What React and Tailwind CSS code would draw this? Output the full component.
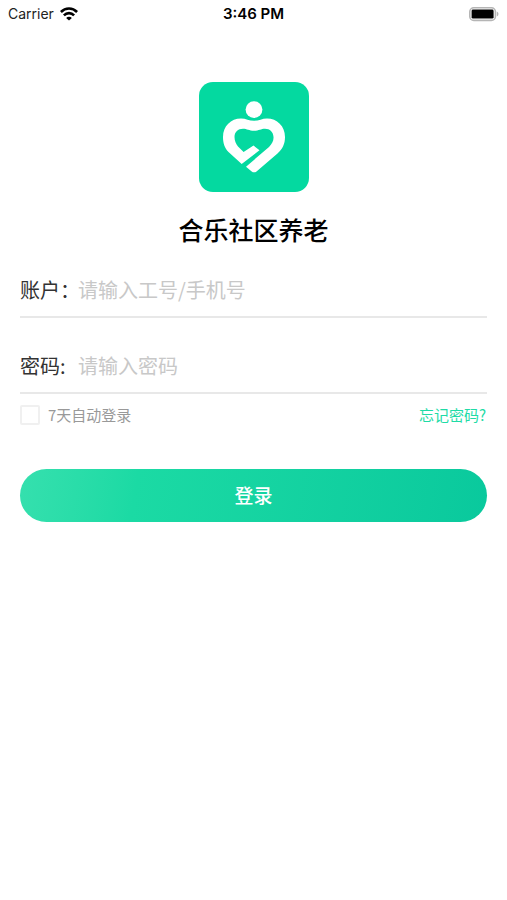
import { useState } from "react"

function StatusBar() {
  return (
    <header className="grid grid-cols-3 items-center h-7 px-2 font-['Inter','Liberation_Sans',sans-serif] text-[14px] leading-5 text-black">
      <div className="flex items-center gap-[6px] text-[#222]">
        <span>Carrier</span>
        <svg width="18" height="14" viewBox="0 0 18 14" fill="none" stroke="#000" strokeWidth="2.6">
          <path d="M0.9 5 C5.4 0.4 12.6 0.4 17.1 5" />
          <path d="M3.9 8.3 C6.8 5.4 11.2 5.4 14.1 8.3" />
          <path d="M9 13.6 L6.1 10.9 C7.7 9.4 10.3 9.4 11.9 10.9 Z" fill="#000" stroke="none" />
        </svg>
      </div>
      <span className="text-center text-[15px] font-semibold">3:46 PM</span>
      <svg className="justify-self-end" width="30" height="15" viewBox="0 0 30 15">
        <rect x="0.8" y="0.8" width="25.6" height="12.6" rx="4" fill="#fff" stroke="#b5b5b5" strokeWidth="1.6" />
        <rect x="2.6" y="2.6" width="22" height="9" rx="1.4" fill="#000" />
        <path d="M27.8 4.6 C30 5.4 30 8.8 27.8 9.6 Z" fill="#b5b5b5" />
      </svg>
    </header>
  )
}

function Logo() {
  return (
    <svg width="110" height="110" viewBox="0 0 110 110">
      <rect width="110" height="110" rx="14" fill="#04d9a0" />
      <circle cx="55" cy="27.6" r="8.4" fill="#fff" />
      <path
        fill="#fff"
        d="M42.7 82 L29.5 70 C25.5 66 24 61 24 55 C24 44 32 36.5 42 36.5 C47 36.5 50 38.8 55 38.8 C60 38.8 63 36.5 68 36.5 C78 36.5 86 44 86 55 C86 62 83.5 67 78.5 71.5 L57.5 89.5 Q55 91.2 52.7 89.5 L47 84.7 L70 65 C73 62 74.8 59 74.5 55 C74.2 50 71 46.8 66 46.8 C62 46.8 60 48.8 55 48.8 C50 48.8 48 46.8 44 46.8 C39 46.8 35.5 50 35.5 55 C35.5 59 37 62 39 64.5 L44.6 70 L54.5 63.5 L60.5 68.3 Z"
      />
    </svg>
  )
}

function Field({ id, label, ...rest }) {
  return (
    <div className="flex items-center h-11 border-b-2 border-[#e8e8e8] pb-[11px]">
      <label htmlFor={id} className="w-[58px] shrink-0 whitespace-nowrap text-[20px] leading-8 text-[#333]">
        {label}
      </label>
      <input
        id={id}
        className="flex-1 min-w-0 bg-transparent text-[20px] leading-8 text-[#333] placeholder:text-[#c8c8c8] outline-none"
        {...rest}
      />
    </div>
  )
}

function App() {
  const [account, setAccount] = useState("")
  const [password, setPassword] = useState("")
  const [remember, setRemember] = useState(false)

  const handleSubmit = (e) => {
    e.preventDefault()
  }

  return (
    <div className="min-h-screen bg-white font-['Noto_Sans_CJK_SC',sans-serif]">
      <StatusBar />

      <main className="px-5 pt-[54px]">
        <div className="flex flex-col items-center">
          <Logo />
          <h1 className="mt-[19px] text-[25px] leading-9 font-medium text-black">合乐社区养老</h1>
        </div>

        <form onSubmit={handleSubmit} className="mt-[27px]">
          <Field
            id="account"
            label="账户："
            type="text"
            placeholder="请输入工号/手机号"
            value={account}
            onChange={(e) => setAccount(e.target.value)}
          />
          <div className="mt-8">
            <Field
              id="password"
              label="密码:"
              type="password"
              placeholder="请输入密码"
              value={password}
              onChange={(e) => setPassword(e.target.value)}
            />
          </div>

          <div className="flex items-center justify-between mt-[9px] text-[15px] leading-6">
            <label className="flex items-center gap-2 text-[#999]">
              <input
                type="checkbox"
                className="appearance-none size-5 border-2 border-[#f0f0f0] rounded-xs bg-white checked:bg-[#04d9a0]"
                checked={remember}
                onChange={(e) => setRemember(e.target.checked)}
              />
              7天自动登录
            </label>
            <a href="#forgot" className="pr-px text-[#1fdba6]">忘记密码?</a>
          </div>

          <button
            type="submit"
            className="mt-[42px] w-full h-[53px] rounded-full bg-linear-100 from-[#35e0ae] via-[#1bdaa4] via-25% to-[#09c99d] pb-px text-[19px] font-medium text-white"
          >
            登录
          </button>
        </form>
      </main>
    </div>
  )
}

export default App
